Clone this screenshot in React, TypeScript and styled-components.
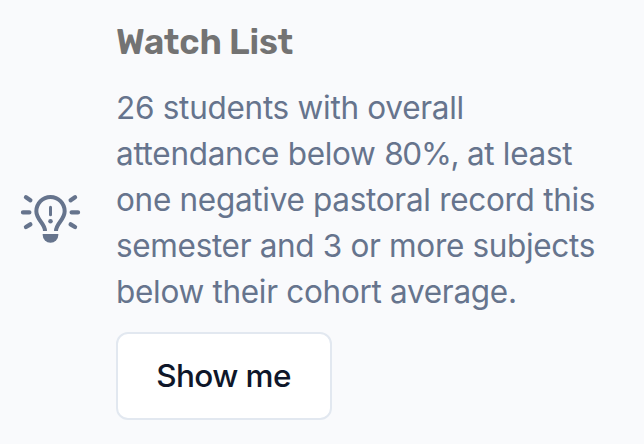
import React from "react";
import styled, { createGlobalStyle } from "styled-components";

const GlobalStyle = createGlobalStyle`
  * { box-sizing: border-box; }
  body { margin: 0; background: #f9fafc; -webkit-font-smoothing: antialiased; }
`;
const Card = styled.section`
  display: flex;
  width: 644px;
  height: 444px;
  background: #f9fafc;
  font-family: Inter, sans-serif;
`;
const IconColumn = styled.div`
  display: flex;
  align-items: center;
  width: 116px;
  padding: 0 0 9px 10px;
`;
const Content = styled.div`
  display: flex;
  flex-direction: column;
  align-items: flex-start;
  padding-top: 18px;
`;
const Title = styled.h2`
  margin: 0 0 18.6px;
  font: 600 35px/48px "Rubik", Roboto, sans-serif;
  letter-spacing: -0.2px;
  color: #737373;
`;
const Body = styled.p`
  margin: 0;
  font-size: 31.5px;
  line-height: 46.2px;
  color: #66748d;
  white-space: nowrap;
  font-feature-settings: "calt" 0, "liga" 0;
`;
const Line = styled.span<{ $tracking: number }>`
  display: block;
  letter-spacing: ${({ $tracking }) => $tracking}px;
`;
const Figure = styled.span`
  letter-spacing: -1.3px;
`;
const Button = styled.button`
  margin-top: 16.4px;
  width: 216px;
  height: 88px;
  padding: 0 1px 0 0;
  border: 2px solid #e2e8f0;
  border-radius: 12px;
  background: #fff;
  color: #0f172a;
  font: 500 31.5px/1 Inter, sans-serif;
  letter-spacing: -0.6px;
`;

function BulbIcon() {
  return (
    <svg width="80" height="75" viewBox="0 0 240 225" fill="none" stroke="#66748d" strokeWidth="12" strokeLinecap="round" strokeLinejoin="round">
      <path strokeLinecap="butt" d="M105 153C105 130 79 120 79 94a42.5 43 0 0 1 85 0C164 120 138 130 138 153" />
      <path fill="#66748d" stroke="none" d="M98 162h47v3a23.5 23 0 0 1-47 0z" />
      <path strokeWidth="9" d="M121.5 82v22" />
      <circle cx="121.5" cy="124" r="6.8" fill="#66748d" stroke="none" />
      <path strokeWidth="13" d="M39 97h19M185 97h19M48 52l13 9M195 52l-13 9M48 141l13-8M195 141l-13-8" />
    </svg>
  );
}

export default function App() {
  return (
    <>
      <GlobalStyle />
      <Card>
        <IconColumn><BulbIcon /></IconColumn>
        <Content>
          <Title>Watch List</Title>
          <Body>
            <Line $tracking={-0.28}>26 students with overall</Line>
            <Line $tracking={-0.3}>attendance below <Figure>80%,</Figure> at least</Line>
            <Line $tracking={-0.3}>one negative pastoral record this</Line>
            <Line $tracking={-0.33}>semester and 3 or more subjects</Line>
            <Line $tracking={-0.3}>below their cohort average.</Line>
          </Body>
          <Button>Show me</Button>
        </Content>
      </Card>
    </>
  );
}
